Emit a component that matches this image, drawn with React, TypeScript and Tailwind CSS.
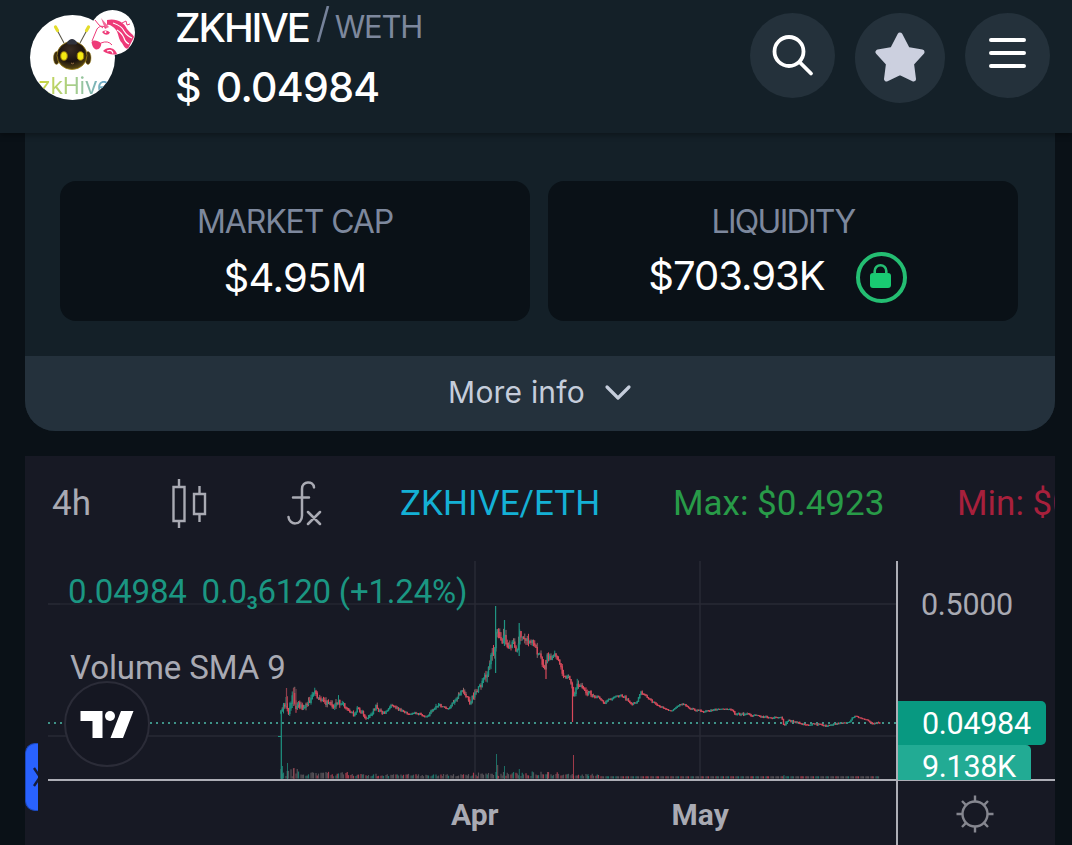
import type { ReactNode } from "react";

const UP = "#1f9482";
const DOWN = "#d9485a";
const MIXED = "#8f6a6a";

// [x, close, wick size] anchors, everything between them is interpolated
const anchors: [number, number, number][] = [
    [281, 713, 4], [283, 709, 5], [285, 703, 8], [287, 704, 9], [289, 712, 5], [292, 699, 7], [294, 697, 7],
    [296, 705, 6], [300, 705, 4], [303, 708, 4], [308, 704, 4], [311, 698, 4], [315, 693, 4], [318, 700, 3],
    [322, 698, 4], [325, 703, 4], [330, 705, 4], [335, 706, 4], [338, 700, 5], [342, 704, 4], [346, 708, 3],
    [350, 712, 3], [354, 715, 2], [357, 709, 2], [363, 713, 2], [367, 720, 3], [371, 715, 2], [376, 706, 4],
    [382, 714, 2], [387, 711, 1], [392, 705, 2], [398, 709, 2], [404, 712, 1], [410, 715, 1], [416, 713, 1],
    [422, 715, 1], [427, 717, 1], [432, 711, 2], [437, 705, 3], [442, 706, 1], [448, 709, 1], [453, 703, 3],
    [457, 700, 3], [461, 690, 2], [466, 695, 3], [470, 703, 4], [474, 693, 5], [480, 687, 4], [485, 677, 6],
    [489, 667, 8], [491, 658, 7], [494, 656, 8], [496, 630, 5], [498, 634, 8], [502, 641, 4], [504, 634, 9],
    [507, 645, 4], [510, 648, 5], [513, 643, 4], [517, 654, 3], [519, 636, 8], [522, 633, 6], [526, 641, 6],
    [530, 639, 5], [534, 643, 4], [537, 651, 6], [541, 658, 4], [545, 670, 5], [547, 657, 4], [550, 658, 4],
    [555, 653, 3], [558, 661, 4], [562, 670, 4], [564, 677, 4], [568, 674, 4], [572, 684, 3], [574, 697, 5],
    [577, 684, 5], [583, 687, 2], [587, 692, 4], [590, 694, 4], [594, 697, 2], [598, 697, 1], [604, 703, 1],
    [609, 700, 2], [615, 696, 1], [622, 696, 1], [628, 700, 2], [632, 704, 1], [637, 702, 1], [641, 693, 2],
    [645, 695, 1], [650, 700, 1], [657, 705, 1], [665, 709, 1], [672, 711, 0], [678, 706, 1], [683, 704, 1],
    [690, 709, 1], [700, 711, 1], [704, 712, 1], [715, 710, 1], [722, 709, 0], [733, 710, 1], [735, 714, 1],
    [745, 714, 2], [755, 716, 1], [765, 717, 1], [775, 718, 1], [782, 718, 1], [784, 726, 1], [788, 720, 1],
    [795, 722, 1], [805, 725, 1], [815, 724, 1], [825, 726, 1], [835, 724, 1], [845, 723, 0], [850, 722, 0],
    [852, 718, 0], [855, 716, 1], [860, 718, 0], [867, 720, 0], [873, 724, 1], [880, 723, 1],
];

const rand = (n: number) => {
    const v = Math.sin(n * 12.9898) * 43758.5453;
    return v - Math.floor(v);
};

interface Candle {
    x: number;
    open: number;
    close: number;
    high: number;
    low: number;
    vol: number;
}

function buildCandles(): Candle[] {
    const out: Candle[] = [];
    let prev = 713;
    let seg = 0;
    for (let x = 281; x < 880; x += 1.25) {
        while (seg < anchors.length - 2 && anchors[seg + 1][0] < x) seg++;
        const [x0, y0, w0] = anchors[seg];
        const [x1, y1, w1] = anchors[seg + 1];
        const t = (x - x0) / (x1 - x0);
        const wick = w0 + (w1 - w0) * t;
        const close = y0 + (y1 - y0) * t + (rand(x) - 0.5) * (wick * 1.15 + 0.5);
        const base = x < 300 ? 8 : x < 350 ? 4.5 : x > 470 && x < 560 ? 5 : x < 600 ? 2.5 : 1;
        out.push({
            x,
            open: prev,
            close,
            high: Math.min(prev, close) - rand(x + 7) * wick * 1.1,
            low: Math.max(prev, close) + rand(x + 3) * wick * 0.8,
            vol: x < 600 ? 1.5 + rand(x + 11) * base : 1.5,
        });
        prev = close;
    }
    return out;
}

const candles = buildCandles();

// x, top, bottom, color
const spikes: [number, number, number, string][] = [
    [286.5, 688, 706, "#8e3e4c"], [293.5, 688, 706, "#8e3e4c"], [296, 689, 706, "#6d3c49"],
    [495.6, 606, 673, UP], [504.5, 620, 646, UP], [519.2, 623, 656, UP], [546, 660, 679, DOWN], [572.5, 684, 722, DOWN],
];

const volumeSpikes: [number, number, string][] = [
    [282.5, 12, UP], [287.5, 15, UP], [294, 10, DOWN], [496.5, 24, UP], [497.7, 13, MIXED], [504.5, 12, UP],
    [519.3, 9, UP], [547.5, 6, MIXED], [573.5, 23, DOWN], [588, 4, UP], [784, 3, UP],
];

function PriceChart() {
    return (
        <svg className="block shrink-0" width="871" height="219" viewBox="25 561 871 219">
            <g stroke="#292a35" strokeWidth="1.5">
                <path d="M48 604H60M468 604H897M48 736H897M475 561V779M700 561V779" />
                <path d="M60 604H468" opacity="0.75" />
            </g>
            <path d="M48 723H897" stroke="#3f9388" strokeWidth="2" strokeDasharray="2 4" />
            {candles.map((c, i) => {
                const color = c.close <= c.open ? UP : DOWN;
                const wickColor = rand(i) > 0.6 ? MIXED : color;
                return (
                    <g key={c.x} stroke={color}>
                        <path d={`M${c.x} ${c.high}V${c.low}`} stroke={wickColor} strokeWidth="1" />
                        <path d={`M${c.x} ${Math.min(c.open, c.close) - 0.5}V${Math.max(c.open, c.close) + 0.5}`} strokeWidth="1.4" />
                        {i % 4 !== 3 && (
                            <path d={`M${c.x} 778.500V${777.8 - c.vol}`} stroke={rand(i + 5) > 0.4 ? "#6b6468" : color} strokeWidth="1.2" opacity="0.75" />
                        )}
                    </g>
                );
            })}
            <path d="M278 736.5H281.3M281.3 712V779" fill="none" stroke={UP} strokeWidth="1.2" />
            {spikes.map(([x, top, bottom, color]) => (
                <path key={x} d={`M${x} ${top}V${bottom}`} stroke={color} strokeWidth="1.2" />
            ))}
            {volumeSpikes.map(([x, h, color]) => (
                <path key={x} d={`M${x} 779V${778 - h}`} stroke={color} strokeWidth="1" opacity="0.7" />
            ))}
        </svg>
    );
}

function RoundButton({ className, children }: { className: string; children: ReactNode }) {
    return (
        <button className={`flex items-center justify-center rounded-full bg-[#24313b] ${className}`}>
            {children}
        </button>
    );
}

function TokenAvatar() {
    return (
        <div className="relative ml-[30px] mt-[15px] size-[85px] shrink-0">
            <div className="relative size-[85px] overflow-hidden rounded-full bg-white">
                <svg className="absolute left-0 top-0" width="85" height="85" viewBox="0 0 85 85">
                    <defs>
                        <radialGradient id="bot" cx="45%" cy="30%" r="70%">
                            <stop offset="0" stopColor="#3a2c22" />
                            <stop offset="0.6" stopColor="#1c130e" />
                            <stop offset="1" stopColor="#5c4a12" />
                        </radialGradient>
                    </defs>
                    <path d="M27 15L34 28M57 15L50 28" stroke="#5d5a4c" strokeWidth="1.1" />
                    <path d="M25.500 12L27.500 15.500M58.500 12L56.500 15.500" stroke="#e3dc2a" strokeWidth="3.200" strokeLinecap="round" />
                    <ellipse cx="26.500" cy="43" rx="3" ry="6.500" fill="#3b2c10" stroke="#a18416" strokeWidth="0.500" />
                    <ellipse cx="58" cy="43" rx="3" ry="6.500" fill="#3b2c10" stroke="#a18416" strokeWidth="0.500" />
                    <ellipse cx="42" cy="40.500" rx="15" ry="14" fill="url(#bot)" stroke="#a18416" strokeWidth="0.8" />
                    <path d="M36.500 28Q42 20 47.500 28L46 29.500H38Z" fill="#30323d" />
                    <ellipse cx="34" cy="41" rx="3.300" ry="4.300" fill="#f4ea13" stroke="#9c7d0c" />
                    <ellipse cx="50.500" cy="41" rx="3.300" ry="4.300" fill="#f4ea13" stroke="#9c7d0c" />
                    <path d="M41 48Q42.500 49.500 44 48" fill="none" stroke="#9a6f45" />
                </svg>
                <span className="absolute left-[8px] top-[58px] bg-linear-to-r from-[#cbd534] via-[#a8cf8a] to-[#5f9fd0] bg-clip-text text-[23px] leading-[27px] tracking-[-0.3px] text-transparent">
                    zkHive
                </span>
            </div>
            <svg className="absolute left-[60px] top-[-5px]" width="45" height="45" viewBox="0 0 45 45">
                <circle cx="22.500" cy="22.500" r="22.500" fill="#fff" />
                <g fill="#ee3a78">
                    <path d="M11 8L19 17L15 19Z" opacity="0.75" />
                    <path d="M17 10C26 8 34 12 37 19C40 23 43 24 44 27C42 31 41 33 39 37C37 41 34 37 32 33C28 29 29 24 26 20C23 16 19 14 17 15Z" />
                    <path d="M1.500 32C4 29 8 31 11 33C12 36 9 40 6 39.500C3 38.500 2 35 1.500 32Z" />
                    <path d="M13 41C17 36 25 37 27 44C23 45.500 17 44 13 41Z" />
                    <path d="M12 22Q16 19 20 22.500Q18 26 14 24Z" />
                </g>
                <path d="M5 10Q9 16 13 18M7 19C10 15 14 16 16 18M7 19L2 31M11 33Q18 30 22 35" fill="none" stroke="#ee3a78" strokeWidth="1" />
                <path d="M17 41Q22 39 23 43.500M23 13Q32 16 34 21Q37 26 42 28M27 20Q32 23 34 28Q35 32 39 34M24 24Q28 27 28 33" fill="none" stroke="#fff" strokeWidth="1.200" />
                <circle cx="15.500" cy="22" r="1" fill="#fff" />
                <path d="M32 13L36 11L37 15L40 14" fill="none" stroke="#ee3a78" />
            </svg>
        </div>
    );
}

function Header() {
    return (
        <header className="relative z-10 flex h-[133px] shrink-0 bg-[#142028] shadow-[0_2px_6px_rgba(0,0,0,0.35)]">
            <TokenAvatar />
            <div className="ml-[60px] w-[575px] whitespace-nowrap text-white">
                <div className="flex h-[54px] items-start">
                    <span className="mt-[8px] text-[40px] font-medium leading-[40px] tracking-[-2.1px]">ZKHIVE</span>
                    <svg className="ml-[7px] mt-[6px]" width="14" height="37" viewBox="0 0 14 37">
                        <path d="M12 0L2 36" stroke="#76829a" strokeWidth="2.600" />
                    </svg>
                    <span className="ml-[5px] mt-[9px] text-[31px] leading-[36px] tracking-[-1.200px] text-[#7d889d]">WETH</span>
                </div>
                <div className="mt-[13px] text-[41px] font-medium leading-[40px] tracking-[-0.7px]">
                    $<span className="ml-[15px]">0.04984</span>
                </div>
            </div>
            <RoundButton className="mt-[13px] size-[85px]">
                <svg width="42" height="42" viewBox="0 0 42 42" fill="none" stroke="#fff" strokeWidth="3.800" strokeLinecap="round">
                    <circle cx="17" cy="16.500" r="14.500" />
                    <path d="M28 27.500L39 38.500" />
                </svg>
            </RoundButton>
            <RoundButton className="ml-[20px] mt-[13px] size-[90px]">
                <svg className="-mt-[3px]" width="50" height="50" viewBox="0 0 50 50">
                    <path
                        d="M25 3L32.500 17.500L47 20L36.500 31.500L38.500 47L25 40.500L11.500 47L13.500 31.500L3 20L17.500 17.500Z"
                        fill="#ccd0df"
                        stroke="#ccd0df"
                        strokeWidth="5"
                        strokeLinejoin="round"
                    />
                </svg>
            </RoundButton>
            <RoundButton className="ml-[20px] mt-[13px] size-[85px]">
                <svg className="-mt-[6px]" width="38" height="32" viewBox="0 0 38 32" stroke="#fff" strokeWidth="4" strokeLinecap="round">
                    <path d="M2 3H35M2 16H35M2 29H35" />
                </svg>
            </RoundButton>
        </header>
    );
}

function Stats() {
    return (
        <section className="ml-[25px] mr-[17px] h-[298px] shrink-0 overflow-hidden rounded-b-[30px] bg-[#142028]">
            <div className="flex h-[223px] gap-[18px] pl-[35px] pt-[48px]">
                <div className="flex h-[140px] w-[470px] flex-col items-center rounded-[16px] bg-[#0a1117]">
                    <span className="mt-[21px] text-[32px] leading-[40px] tracking-[-1.1px] text-[#7d889d]">MARKET CAP</span>
                    <span className="mt-[16px] text-[40px] leading-[40px] tracking-[-0.6px] text-white">$4.95M</span>
                </div>
                <div className="flex h-[140px] w-[470px] flex-col items-center rounded-[16px] bg-[#0a1117]">
                    <span className="mt-[21px] text-[32px] leading-[40px] tracking-[-1.7px] text-[#7d889d]">LIQUIDITY</span>
                    <div className="mt-[10px] flex items-start gap-[31px] pr-[11px]">
                        <span className="mt-[4px] text-[40px] leading-[40px] tracking-[-1px] text-white">$703.93K</span>
                        <svg width="51" height="51" viewBox="0 0 51 51">
                            <circle cx="25.500" cy="25.500" r="23.500" fill="none" stroke="#24be72" strokeWidth="4" />
                            <rect x="14" y="21" width="21" height="15" rx="3" fill="#19ca72" />
                            <path d="M18.700 22V19A5.800 5.800 0 0 1 30.300 19V22" fill="none" stroke="#24be72" strokeWidth="2.600" />
                        </svg>
                    </div>
                </div>
            </div>
            <button className="flex h-[75px] w-full items-center justify-center bg-[#24313c] text-[#c5cddb]">
                <span className="-mt-[4px] text-[30px] leading-[40px] tracking-[0.2px]">More info</span>
                <svg className="-mt-[1px] ml-[19px]" width="28" height="18" viewBox="0 0 28 18" fill="none" stroke="currentColor" strokeWidth="3.200" strokeLinecap="round" strokeLinejoin="round">
                    <path d="M3 3L14 14L25 3" />
                </svg>
            </button>
        </section>
    );
}

function Toolbar() {
    return (
        <div className="flex h-[105px] items-start overflow-hidden whitespace-nowrap pl-[27px] pt-[22px] text-[35px] leading-[52px] text-[#a9aab3]">
            <span className="w-[119px] shrink-0">4h</span>
            <svg className="shrink-0" width="36" height="50" viewBox="171 478 36 50" fill="none" stroke="#a9aab3" strokeWidth="2.400">
                <path d="M173.500 487H184.500V521H173.500ZM179 479V487M179 521V529M194 494H205V514H194ZM199.500 486V494M199.500 514V522" />
            </svg>
            <svg className="ml-[80px] shrink-0" width="36" height="50" viewBox="287 478 36 50" fill="none" stroke="#a9aab3" strokeWidth="2.500" strokeLinecap="round">
                <path d="M314 487.500C313.500 480.500 302 480.500 302 489V515.500C302 526 289 525.500 288.500 517M293 497.500H309M308 512L320 524M320 512L308 524" />
            </svg>
            <span className="ml-[77px] w-[273px] shrink-0 text-[#14b0d5]">ZKHIVE/ETH</span>
            <span className="w-[284px] shrink-0 text-[#289b48]">Max: $0.4923</span>
            <span className="shrink-0 text-[#a8203c]">Min: $0</span>
        </div>
    );
}

function ChartPanel() {
    return (
        <section className="relative ml-[25px] mr-[17px] mt-[25px] h-[389px] shrink-0 overflow-hidden bg-[#171924] font-['Roboto']">
            <Toolbar />
            <div className="flex h-[219px]">
                <PriceChart />
                <div className="w-[159px] overflow-hidden border-l-2 border-[#adaeb6] text-[30.500px] tracking-[-0.300px] text-[#a9aab3]">
                    <div className="pl-[23px] pt-[24px] leading-[40px]">0.5000</div>
                    <div className="-ml-[2px] mt-[76px] h-[44px] w-[150px] rounded-r-[5px] bg-[#089981] pl-[26px] leading-[45px] text-white">0.04984</div>
                    <div className="-ml-[2px] h-[44px] w-[135px] rounded-r-[5px] bg-[#22ab94] pl-[26px] leading-[44px] text-white">9.138K</div>
                </div>
            </div>
            <div className="-mt-px ml-[23px] h-[2px] bg-[#adaeb6]" />
            <div className="flex h-[66px] text-[30px] font-bold leading-[68px] text-[#a9aab3]">
                <span className="w-[871px] shrink-0 pl-[426px]">
                    Apr
                    <span className="ml-[173px]">May</span>
                </span>
                <div className="w-[159px] border-l-2 border-[#adaeb6] pl-[57px] pt-[13px]">
                    <svg width="40" height="40" viewBox="-20 -20 40 40" fill="none" stroke="#85868f" strokeWidth="2.400">
                        <circle r="12.500" />
                        <path d="M0 -13V-18.500M0 13V18.500M-13 0H-18.500M13 0H18.500M-9.200 -9.200L-13 -13M9.200 -9.200L13 -13M-9.200 9.200L-13 13M9.200 9.200L13 13" />
                    </svg>
                </div>
            </div>

            {/* legend and badges over the plot */}
            <div className="absolute left-[43px] top-[116px] whitespace-pre text-[33px] leading-[40px] tracking-[-0.200px] text-[#1b9682]">
                0.04984<span className="ml-[15px]">0.0</span>
                <span className="relative top-[6px] text-[19px] font-bold">3</span>6120 (+1.24%)
            </div>
            <div className="absolute left-[45px] top-[192px] text-[33px] leading-[40px] tracking-[-0.100px] text-[#a9aab3]">Volume SMA 9</div>
            <div className="absolute left-[39px] top-[225px] flex size-[86px] items-center justify-center rounded-full border-2 border-[#2b2c38] bg-[#151722]">
                <svg className="mt-[2px]" width="54" height="28" viewBox="0 0 54 28" fill="#fff">
                    <path d="M0.500 0H22.500V27H12.500V10H0.500ZM41 0H53.500L43 27H30.500Z" />
                    <circle cx="30" cy="5" r="5" />
                </svg>
            </div>
            <div className="absolute left-0 top-[287px] flex h-[68px] w-[13px] items-center overflow-hidden rounded-l-[10px] border-y border-l border-[#1b48bd] bg-[#2962ff]">
                <svg className="ml-[7px] shrink-0" width="10" height="20" viewBox="0 0 10 20" fill="none" stroke="#151d3d" strokeWidth="2.400">
                    <path d="M1 1L7 10L1 19" />
                </svg>
            </div>
        </section>
    );
}

export default function App() {
    return (
        <div className="flex h-[845px] w-[1072px] flex-col overflow-hidden bg-[#0a1117] font-['Inter',sans-serif]">
            <Header />
            <Stats />
            <ChartPanel />
        </div>
    );
}
